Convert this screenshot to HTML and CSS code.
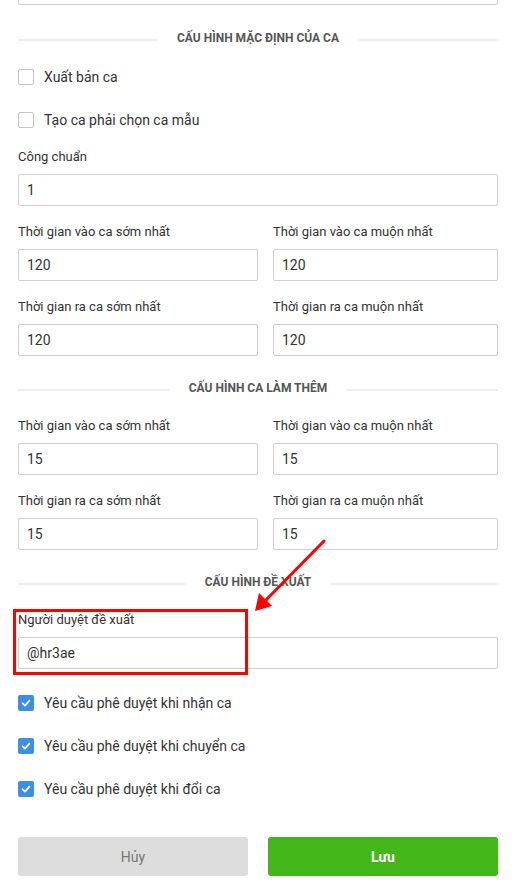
FILE: index.html
```html
<!DOCTYPE html>
<html lang="vi">
<head>
<meta charset="utf-8">
<title>Cấu hình ca</title>
<link rel="stylesheet" href="styles.css">
</head>
<body>
<div class="page">
  <div class="input input-top"></div>

  <div class="section-title section-first"><span class="line"></span><span class="title-text">CẤU HÌNH MẶC ĐỊNH CỦA CA</span><span class="line"></span></div>

  <div class="check-row check-first"><span class="box"></span><span class="check-label">Xuất bản ca</span></div>
  <div class="check-row"><span class="box"></span><span class="check-label">Tạo ca phải chọn ca mẫu</span></div>

  <div class="field field-after-check">
    <div class="label">Công chuẩn</div>
    <div class="input">1</div>
  </div>

  <div class="grid">
    <div class="field"><div class="label">Thời gian vào ca sớm nhất</div><div class="input">120</div></div>
    <div class="field"><div class="label">Thời gian vào ca muộn nhất</div><div class="input">120</div></div>
    <div class="field"><div class="label">Thời gian ra ca sớm nhất</div><div class="input">120</div></div>
    <div class="field"><div class="label">Thời gian ra ca muộn nhất</div><div class="input">120</div></div>
  </div>

  <div class="section-title"><span class="line"></span><span class="title-text">CẤU HÌNH CA LÀM THÊM</span><span class="line"></span></div>

  <div class="grid grid-after-title">
    <div class="field"><div class="label">Thời gian vào ca sớm nhất</div><div class="input">15</div></div>
    <div class="field"><div class="label">Thời gian vào ca muộn nhất</div><div class="input">15</div></div>
    <div class="field"><div class="label">Thời gian ra ca sớm nhất</div><div class="input">15</div></div>
    <div class="field"><div class="label">Thời gian ra ca muộn nhất</div><div class="input">15</div></div>
  </div>

  <div class="section-title"><span class="line"></span><span class="title-text">CẤU HÌNH ĐỀ XUẤT</span><span class="line"></span></div>

  <div class="field field-after-title highlight-wrap">
    <div class="label">Người duyệt đề xuất</div>
    <div class="input">@hr3ae</div>
    <div class="highlight"></div>
  </div>

  <div class="check-row check-after-input"><span class="box checked"><svg viewBox="0 0 16 16" width="16" height="16"><path d="M4.6 8.3 L7 10.6 L11.4 5.6" fill="none" stroke="#fff" stroke-width="1.8" stroke-linecap="round" stroke-linejoin="round"/></svg></span><span class="check-label">Yêu cầu phê duyệt khi nhận ca</span></div>
  <div class="check-row"><span class="box checked"><svg viewBox="0 0 16 16" width="16" height="16"><path d="M4.6 8.3 L7 10.6 L11.4 5.6" fill="none" stroke="#fff" stroke-width="1.8" stroke-linecap="round" stroke-linejoin="round"/></svg></span><span class="check-label">Yêu cầu phê duyệt khi chuyển ca</span></div>
  <div class="check-row"><span class="box checked"><svg viewBox="0 0 16 16" width="16" height="16"><path d="M4.6 8.3 L7 10.6 L11.4 5.6" fill="none" stroke="#fff" stroke-width="1.8" stroke-linecap="round" stroke-linejoin="round"/></svg></span><span class="check-label">Yêu cầu phê duyệt khi đổi ca</span></div>

  <div class="actions">
    <div class="btn btn-cancel">Hủy</div>
    <div class="btn btn-save">Lưu</div>
  </div>

  <svg class="arrow" width="514" height="892" viewBox="0 0 514 892">
    <line x1="324" y1="541" x2="264" y2="602" stroke="#f00" stroke-width="3" stroke-linecap="round"/>
    <polygon points="255,611 259,593 272,606" fill="#f00"/>
  </svg>
</div>
</body>
</html>
```

FILE: styles.css
```css
* { box-sizing: border-box; }
html, body { margin: 0; padding: 0; background: #fff; }
body {
  font-family: Roboto, "Noto Sans", Arial, sans-serif;
  color: #333;
  overflow: hidden;
}
.page {
  position: relative;
  width: 514px;
  height: 892px;
  padding: 0 16px 0 18px;
  display: flex;
  flex-direction: column;
}
.input {
  height: 32px;
  border: 1px solid #cfcfcf;
  border-radius: 2px;
  padding: 0 8px;
  font-size: 14px;
  line-height: 30px;
  color: #333;
  background: #fff;
}
.input-top { margin-top: -27px; flex-shrink: 0; }

.section-title {
  display: flex;
  align-items: center;
  height: 16px;
  margin-top: 24px;
  flex-shrink: 0;
}
.section-first { margin-top: 25px; }
.section-title .line {
  flex: 1;
  height: 2px;
  background: #eeeeee;
  margin-top: 4px;
}
.title-text {
  padding: 0 20px;
  font-size: 12px;
  font-weight: 700;
  line-height: 16px;
  color: #555;
}

.check-row {
  display: flex;
  align-items: center;
  height: 20px;
  margin-top: 23px;
  flex-shrink: 0;
}
.check-first { margin-top: 21px; }
.check-after-input { margin-top: 24px; }
.box {
  width: 16px;
  height: 16px;
  border: 1px solid #c4c4c4;
  border-radius: 2px;
  background: #fff;
  margin-right: 10px;
  display: flex;
}
.box.checked {
  border: none;
  background: #3f8ee6;
}
.check-label {
  font-size: 14px;
  line-height: 20px;
  color: #333;
}

.field { display: flex; flex-direction: column; }
.label {
  font-size: 13px;
  line-height: 20px;
  margin-bottom: 7px;
  color: #333;
}
.field-after-check { margin-top: 17px; }
.field-after-title { margin-top: 20px; }

.grid {
  display: grid;
  grid-template-columns: 240px 225px;
  column-gap: 15px;
  row-gap: 16px;
  margin-top: 16px;
}
.grid-after-title { margin-top: 20px; }

.highlight-wrap { position: relative; }
.highlight {
  position: absolute;
  left: -5px;
  top: -1px;
  width: 235px;
  height: 66px;
  border: 3px solid #f00;
}

.actions {
  display: flex;
  gap: 20px;
  margin-top: 38px;
}
.btn {
  flex: 1;
  height: 39px;
  border-radius: 3px;
  display: flex;
  align-items: center;
  justify-content: center;
  font-size: 14px;
}
.btn-cancel { background: #dddddd; color: #777; }
.btn-save { background: #43b619; color: #fff; font-weight: 700; }

.arrow {
  position: absolute;
  left: 0;
  top: 0;
  pointer-events: none;
}
```
